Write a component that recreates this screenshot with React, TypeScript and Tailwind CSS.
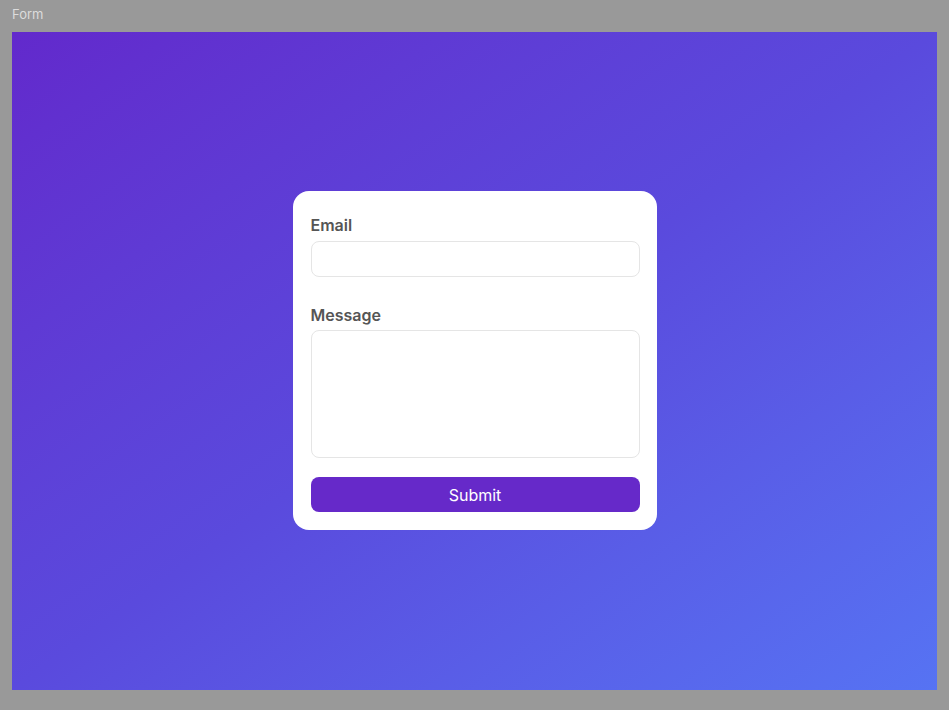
export default function App() {
  return (
    <div className="h-[710px] w-[949px] bg-[#999999] font-['Inter',sans-serif] flex flex-col">
      <div className="h-[32px] pl-[12px] pt-[5px] text-[13px] leading-[18px] text-[#dcdcdc]">Form</div>
      <div className="mx-[12px] h-[658px] bg-linear-to-br from-[#6229cc] via-[#5a4add] to-[#5673f3] flex items-center justify-center">
        <form className="-mt-[1px] w-[364px] bg-white rounded-[16px] pl-[18px] pr-[17px] pt-[22px] pb-[18px] flex flex-col">
          <label className="text-[16px] leading-[24px] font-semibold text-[#555555] mb-[4px]">Email</label>
          <input type="email" className="h-[36px] w-full rounded-[8px] border border-[#e5e5e5] outline-none px-3" />
          <label className="mt-[26px] text-[16px] leading-[24px] font-semibold text-[#555555] mb-[3px]">Message</label>
          <textarea className="h-[128px] w-full rounded-[8px] border border-[#e5e5e5] outline-none p-3 resize-none" />
          <button type="button" className="mt-[19px] h-[35px] w-full rounded-[8px] bg-[#6629c9] text-white text-[16px] font-normal">
            Submit
          </button>
        </form>
      </div>
    </div>
  );
}
